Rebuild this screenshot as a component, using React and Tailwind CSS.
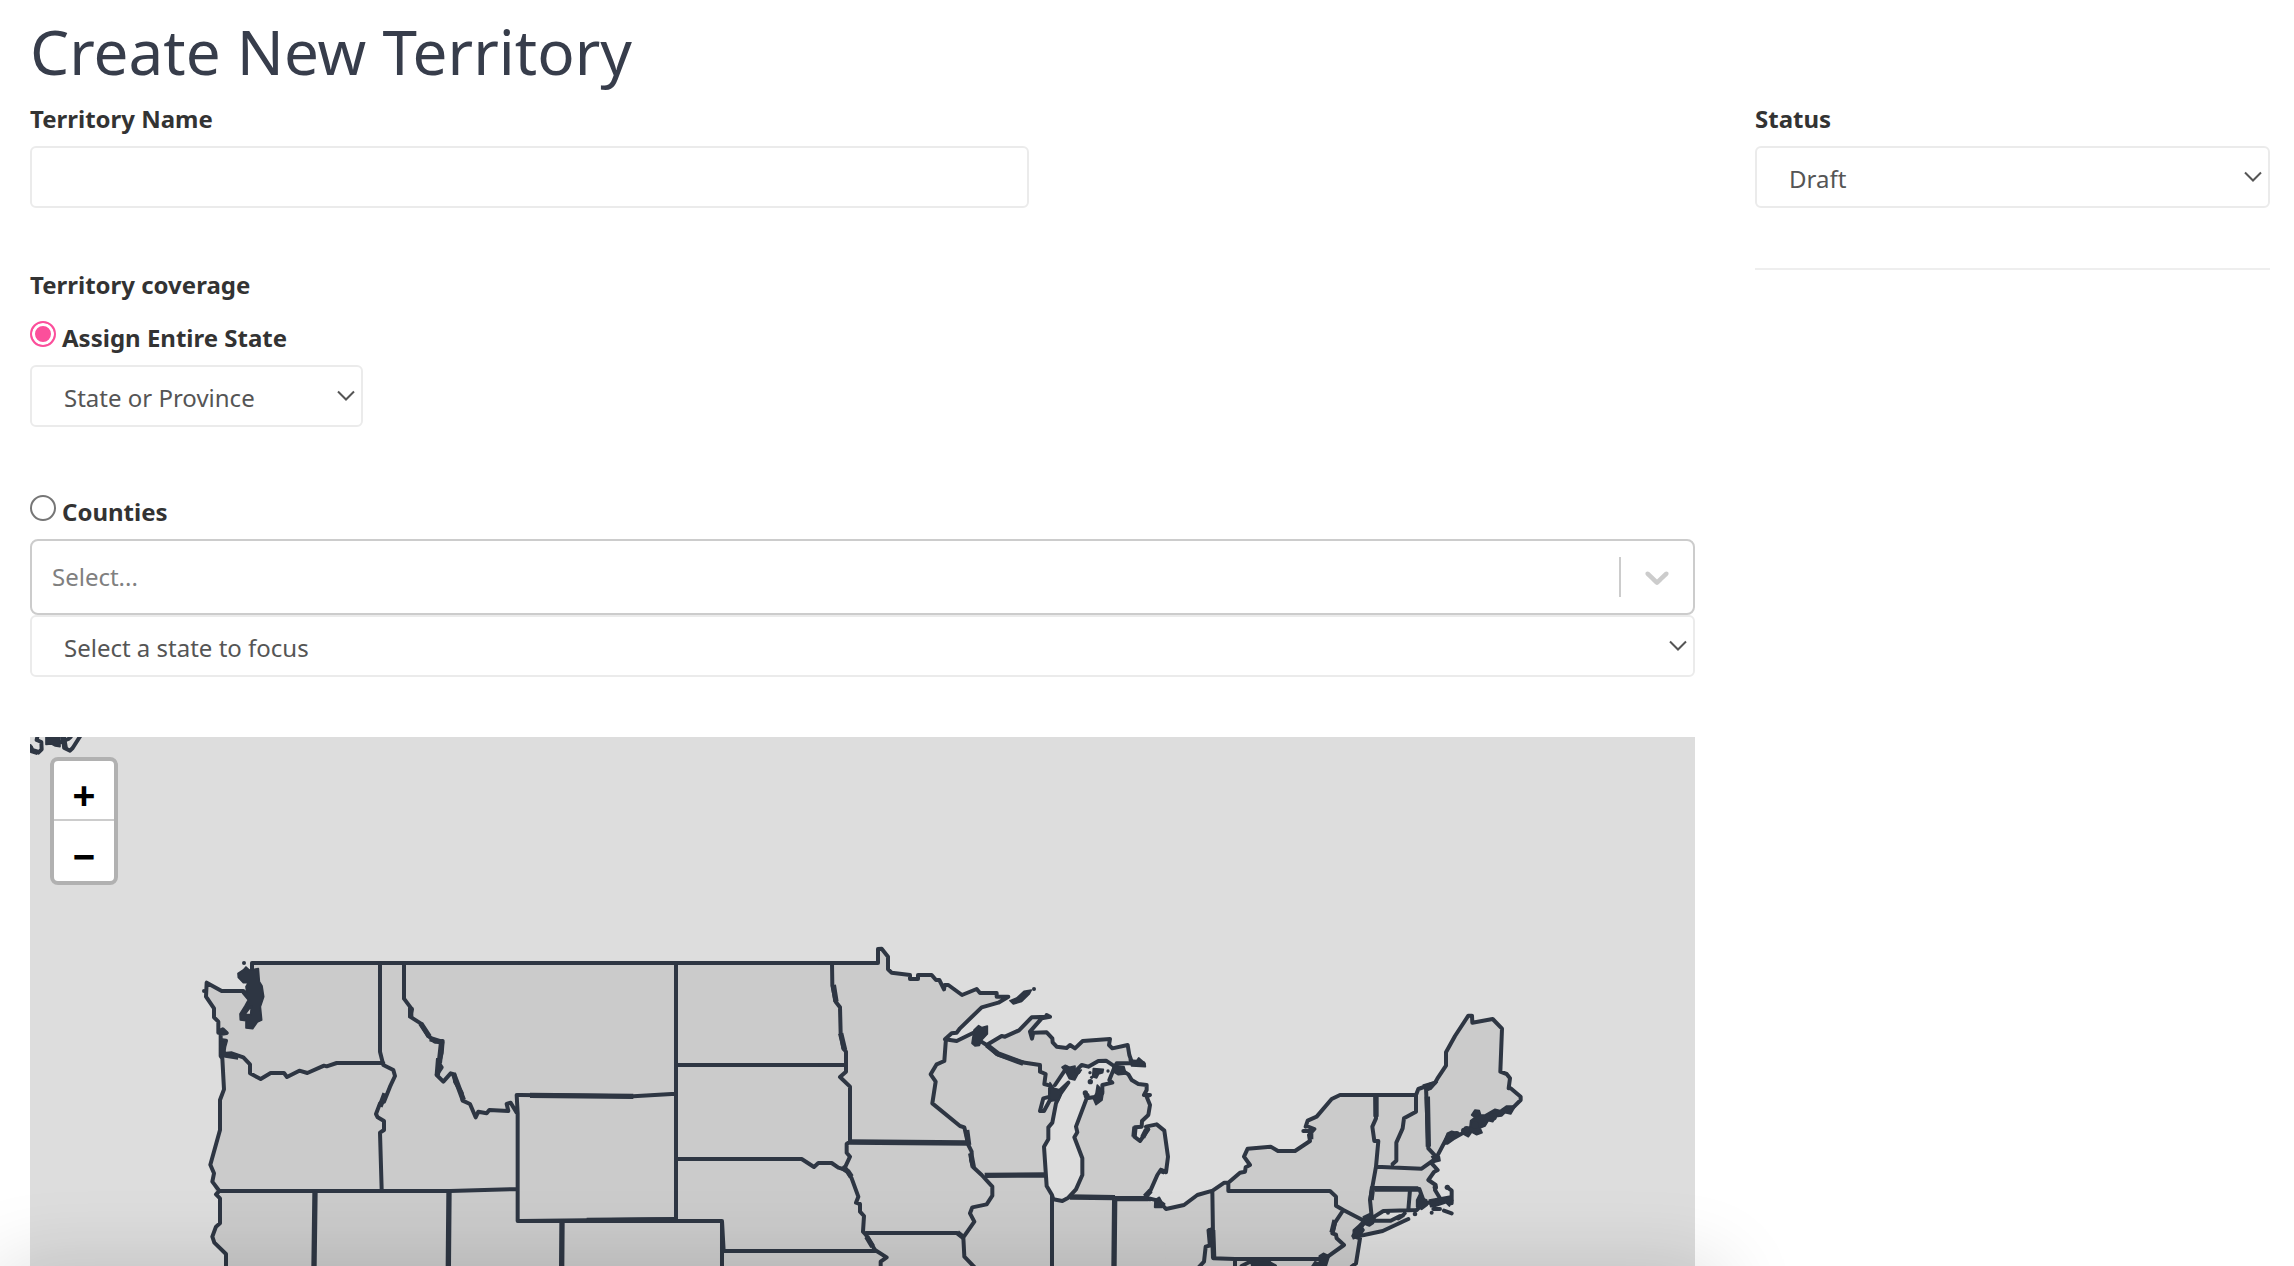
import React, { useState } from "react";

const labelClass = "block text-[24px] leading-[36px] font-bold text-[#333]";
const fieldClass =
  "h-[62px] w-full rounded-md border-2 border-[#ebebeb] bg-white text-[24px] text-[#555] focus:outline-none";

const SelectBox = ({ id, className, label, value, onChange, options }) => (
  <div className={`relative ${className}`}>
    <select
      id={id}
      aria-label={label}
      value={value}
      onChange={onChange}
      className={`${fieldClass} appearance-none pt-[3px] pl-8`}
    >
      {options.map((option) => (
        <option key={option}>{option}</option>
      ))}
    </select>
    <svg
      viewBox="0 0 18 12"
      className="pointer-events-none absolute right-2 top-[25px] h-3 w-[18px]"
      fill="none"
      stroke="#555"
      strokeWidth="2"
    >
      <path d="M1 1.5 9 9.5 17 1.5" />
    </svg>
  </div>
);

const RadioOption = ({ id, value, coverage, setCoverage, children }) => (
  <div className="flex items-start gap-1.5">
    <input
      type="radio"
      id={id}
      name="coverage"
      checked={coverage === value}
      onChange={() => setCoverage(value)}
      className="mt-[3px] h-[26px] w-[26px] shrink-0 appearance-none rounded-full border-2 border-[#767676] bg-white checked:border-[#fb4f9b] checked:bg-[#fb4f9b] checked:shadow-[inset_0_0_0_3px_#fff]"
    />
    <label htmlFor={id} className={`${labelClass} mt-[2px]`}>
      {children}
    </label>
  </div>
);

// Each part of the map has its own grid, three units to a pixel
const mapParts = [
  {
    name: "alaska",
    origin: "translate(0 720)",
    land: "",
    lines:
      "M90 78 95 92 115 98 125 88 124 66 110 60 112 51M188 51 190 66 193 84 210 92 218 84 241 48M183 66 205 57 212 51",
    thick: "M90 80 96 92 113 97M190 51 196 86",
    solid: "M138 50H180V80L166 78 155 72 138 73Z",
  },
  {
    name: "west",
    origin: "translate(180 930)",
    land: "M216 99H1082V1010H138V972L103 938 97 920 108 890 120 880V805L108 793 97 755 102 730 91 704 120 600V510L132 478 127 385 122 330 115 308V275L102 262V235L78 200 80 158 125 183H190L215 195Z",
    lines:
      "M216 130V99H1082M205 198 190 183H125L80 158 78 200 102 235V262L115 275V308L128 298 140 309 122 312V330L138 332 133 350 130 372 155 370 190 382 210 403V430L242 447 272 429H312L321 441 358 422 382 429 432 407 440 409 470 399H610M122 330V378L127 385 132 478 120 510V600L91 704 102 730 97 755 118 783 108 793 120 805V880L108 890 97 920 103 938 138 972V1010M600 99V365L610 405 640 420 645 438 630 470 612 515 600 520 588 552 593 562 612 573V600L600 608 605 778M672 99V206L696 238 690 260 722 280 745 318 765 335 788 333 785 370 777 400 785 412 770 435 790 455 812 430 823 433 825 455 845 488 848 512 870 522 887 562 895 545 920 550 928 540 985 543 980 522 992 518 1010 548M1082 495H1010L1013 550V873H1082M118 783H810L1013 777",
    thick:
      "M405 785 402 1010M807 785 805 1010M127 374 175 381M126 335 128 374M776 385 772 435M692 232V262M722 280 748 320M750 326 788 338M615 490 600 530M785 335 778 400M820 430 850 510",
    solid:
      "M174 130 190 120 198 111 208 120 235 116 238 155 246 168 251 200 241 230 245 270 232 276 218 296 198 294 198 272 181 270 180 252 195 228 205 210 188 190 200 185 198 170 205 158 190 158 175 142ZM214 228 194 254 212 254Z",
    dots: [
      [192, 99, 6],
      [72, 183, 6],
    ],
  },
  {
    name: "plains",
    origin: "translate(520 930)",
    land: "M0 99H902V1010H0Z",
    lines:
      "M0 99H905M468 99V868M468 405H902M468 687H845L882 711 895 699H902M0 873H606L611 963H905M606 873V1010M0 873 468 868M0 495 340 499 468 491",
    thick: "M30 496 340 499M126 879 125 1010M200 871 468 869",
    solid: "",
  },
  {
    name: "lakes",
    origin: "translate(820 930)",
    land: "M0 99H174V57L185 56 204 80V118L215 128 270 135V147H294V135H335L370 165H385L426 195 470 177 480 189H530V200H565L535 218 485 232 410 305 378 328 410 333 465 308 500 345 545 318 597 301 635 262 690 257 665 265 632 305 680 307 697 325 710 350 765 355 788 333 870 327 867 350 923 345 935 395 970 400 890 408 925 433 935 450 980 465 978 495 990 525 985 555 966 573 965 590 945 592 943 620 960 633 990 598 1010 583 1033 602 1044 680 1038 727 1022 720 975 802 1015 818 1038 836V1010H0Z",
    water:
      "M745 458 722 490 708 520 697 578 685 592V628L672 650 680 768 700 808 727 813 745 803 768 778 787 735V685L763 622 772 607 768 590 800 505 848 490V465L877 458 868 450 880 408 858 392 835 393 805 410 785 405 762 425ZM738 412 700 475 715 485 750 448ZM690 500 670 505 660 543 674 543Z",
    lines:
      "M0 99H174V57L185 56 204 80V118L215 128 270 135V147H294V135H335L348 150 358 150 372 178 374 165H385L426 195 470 177 480 189H530V200H565L535 218 485 232 420 295 410 308 395 310 375 328 410 333 465 306M484 335 500 345 545 318 555 320 597 301 635 262 690 260 680 255M690 260 665 265 630 305 636 326 640 308 680 307 697 325 698 337 710 350 740 354 750 345 765 355 788 333 870 327 867 345 877 355 923 345 928 375 935 395 970 400 890 400 885 410 858 392 835 393 805 410 785 405 765 425 740 413 705 465M500 345 530 372 605 397 660 405 660 425 677 432 673 462 690 467V500L670 505 660 543H672L690 510 745 458 722 490 708 520 697 578 685 592V628L672 650 680 768 696 795V1010M696 795 700 808 727 813 745 803 768 778 787 735V685L763 622 772 607 768 590 800 505 830 500 847 490V465L877 458 868 450 885 408 925 433 935 450 955 462 980 465V480L972 495H990L980 500 990 525 985 555 966 573 965 590 945 592 943 620 960 633 985 598 978 590 1010 583 1033 602 1044 680 1038 727 1022 720 1012 735 990 785 975 802 1015 812M36 99 37 165 47 215 60 232 62 310 70 355 78 365V425L60 441 90 470V635L80 642V668L90 680 75 712 95 745 115 800 108 818 120 822V845L132 858 129 905 138 915 165 960 200 982 182 995V1010M0 405H78M378 325 373 393 350 403 332 433 347 455 337 520 420 588 433 592 445 645 455 665 453 690 460 712 485 735 517 770V797L500 823 457 832 450 850 463 875 430 922 433 980 462 1010M138 909H412L430 922M0 963H165M0 699H35L55 713 80 720M980 806 990 808",
    thick: "M88 636 443 639M494 736 678 735M750 801 885 803M885 806H985M884 810 882 1010M40 165 48 215M62 310 74 360M65 712 84 725 94 740M440 600 446 645M500 345 535 372 610 400M452 670 460 712M140 920 158 950M690 510 712 490M975 800 992 782M945 590 942 620M980 598 968 622M1018 720 1034 726M412 908 432 924",
    solid:
      "M456 340 462 300 476 287 486 293 502 288 502 312 485 330 478 346 465 348ZM570 212 590 204 612 184 634 180 628 192 605 214 580 222ZM690 458 702 475 722 480 732 472 715 512 690 512ZM726 412 736 406 748 412 765 408 765 425 784 420 772 435 764 450 748 446 740 430ZM928 390 950 392 956 384 975 400 976 410 935 408ZM880 406 912 410 918 432 895 434 878 424ZM820 416 850 418 848 428 836 432 830 444 818 440ZM820 505 828 490 832 465 850 485 846 510 828 524ZM1005 810 1018 802 1025 815 1034 822 1025 832 1004 832Z",
    dots: [
      [642, 177, 6],
      [810, 428, 5],
      [811, 455, 8],
      [796, 489, 8],
      [864, 423, 5],
      [815, 442, 5],
      [773, 424, 9],
      [800, 497, 9],
    ],
  },
  {
    name: "northeast",
    origin: "translate(1160 1000)",
    land: "M18 627 72 615 112 585 158 572 193 548H205L240 518 270 495 252 470 263 446 332 440 354 453H405L450 423 463 387 437 375 443 362 470 350 515 297 540 285H768L775 267 825 248 858 197V157L885 108 925 47H936L937 68 998 57 1026 86 1021 215 1050 235 1046 265 1082 297 1055 322 990 350 930 385 860 405 828 475 815 490 833 510 805 540 827 555 840 595 790 610 770 630 670 633 620 665 590 710 600 715 588 800H15ZM592 700 640 663 692 662 720 648 745 657 668 693Z",
    lines:
      "M0 607 18 627 72 615 112 585 158 572 193 548H205L240 518 255 515 257 502 270 495 252 470 263 446 332 440 354 453H405L450 423 447 405 463 387 440 378M430 393H455M437 380 443 362 470 350 515 297 540 285H768L775 267 800 258 825 248 832 236 858 197V157L885 108 925 47H936L937 68 998 57 1026 86 1021 215 1040 222 1050 235 1046 265H1052L1082 290V300L1060 322M865 405 828 475 815 490 833 510 822 516 805 540 827 555 825 570 840 595M862 562 875 572V610M205 548V573H510L528 590V617L550 630 525 668 517 700 528 704 530 715 552 735 500 772M550 630 612 662 580 708 600 715 588 790 575 800M157 572 160 775 225 777H480M148 690 155 735 137 740 132 785 118 800M646 285 648 355 637 380 643 423H655L648 500 630 600 635 650M768 285V335L732 355 728 385 709 428V482L698 492M798 262 805 445 828 470M648 500 785 506 828 475M642 563 778 567 790 600M750 570 745 630M620 665 635 655 670 633 770 630 790 610 840 605M582 710 612 705 668 693 745 657M720 648 692 662H640L612 670 585 705M715 655 730 645M820 627H840M852 632 875 640M225 777V800M245 798 270 785 295 798 320 785 345 798",
    thick: "M648 290V350M802 290 805 440M158 690 161 775M645 567H775M525 660 516 698M638 560 633 600M452 400 452 418",
    solid:
      "M1066 318 1052 342 1035 338 1025 348 1008 350 998 365 985 362 975 378 960 384 966 398 950 404 935 396 925 410 910 402 885 416 862 432 850 432 862 400 875 394 900 400 930 380 932 362 945 352 935 345 945 330 958 332 962 345 975 345 1005 328 1020 332 1040 318ZM770 600 780 580 788 595 800 600 802 615 785 628 770 620ZM808 600 840 594 872 588 878 602 868 618 858 608 840 614 822 620 812 620ZM610 650 632 640 645 655 640 670 628 678 612 672ZM790 255 815 248 832 246 812 268 800 272ZM580 690 600 672 612 690 602 706 580 716ZM478 768 490 760 508 768 498 800H455L465 785 478 790ZM275 785 325 780 345 800H275ZM815 470 838 470 840 482 825 486ZM142 690 153 685 158 740 146 735Z",
    dots: [
      [684, 638, 6],
      [765, 642, 7],
      [815, 638, 6],
      [862, 562, 8],
      [734, 640, 6],
      [826, 562, 8],
      [890, 402, 9],
      [912, 392, 9],
      [945, 375, 11],
      [920, 388, 10],
      [1000, 350, 11],
      [950, 340, 10],
    ],
  },
];

const StateMap = () => (
  <svg
    viewBox="30 737 1665 529"
    className="block w-full"
    strokeLinejoin="round"
    strokeLinecap="round"
    role="img"
    aria-label="Map of the states"
  >
    {mapParts.map((part) => (
      <g key={part.name} transform={part.origin}>
        <g transform="scale(0.333333)" fill="none" stroke="#2e3643">
          <path d={part.land} fill="#cbcbcb" stroke="none" />
          {part.water && <path d={part.water} fill="#ddd" stroke="none" />}
          <path d={part.lines} strokeWidth="12" />
          <path d={part.thick} strokeWidth="16" strokeLinecap="butt" />
          <path d={part.solid} fill="#2e3643" strokeWidth="5" />
          {part.dots?.map(([x, y, r]) => (
            <circle key={`${x}-${y}`} cx={x} cy={y} r={r} fill="#2e3643" stroke="none" />
          ))}
        </g>
      </g>
    ))}
  </svg>
);

const App = () => {
  const [name, setName] = useState("");
  const [status, setStatus] = useState("Draft");
  const [coverage, setCoverage] = useState("state");
  const [state, setState] = useState("State or Province");
  const [counties, setCounties] = useState("");
  const [focusState, setFocusState] = useState("Select a state to focus");

  return (
    <div className="flex h-screen flex-col overflow-hidden bg-white pl-[30px] pr-6 font-['Noto_Sans',sans-serif]">
      <h1 className="pt-[5px] pb-1 text-[62px] leading-[92px] text-[#373d4b]">Create New Territory</h1>

      <div className="grid min-h-0 flex-1 grid-cols-[333fr_103fr] gap-[60px]">
        <div className="flex min-h-0 flex-col">
          {/* Name */}
          <label htmlFor="territoryName" className={`${labelClass} mb-[9px]`}>
            Territory Name
          </label>
          <div className="w-3/5">
            <input
              type="text"
              id="territoryName"
              className={`${fieldClass} block px-8`}
              value={name}
              onChange={(e) => setName(e.target.value)}
            />
          </div>

          {/* Coverage */}
          <p className={`${labelClass} mt-[59px] mb-[15px]`}>Territory coverage</p>
          <RadioOption id="entireState" value="state" coverage={coverage} setCoverage={setCoverage}>
            Assign Entire State
          </RadioOption>
          <SelectBox
            label="State or Province"
            className="mt-[9px] w-1/5"
            value={state}
            onChange={(e) => setState(e.target.value)}
            options={["State or Province", "Idaho", "Montana", "Oregon", "Washington"]}
          />

          <div className="mt-[65px]">
            <RadioOption id="counties" value="counties" coverage={coverage} setCoverage={setCoverage}>
              Counties
            </RadioOption>
          </div>
          <div className="mt-[9px] flex h-[76px] shrink-0 items-center rounded-lg border-2 border-[#ccc] bg-white">
            <input
              type="text"
              aria-label="Select counties"
              placeholder="Select..."
              value={counties}
              onChange={(e) => setCounties(e.target.value)}
              className="h-full min-w-0 flex-1 bg-transparent pb-0.5 pl-5 text-[24px] text-[#555] placeholder:text-[#808080] focus:outline-none"
            />
            <span className="h-10 w-0.5 bg-[#ccc]" />
            <button type="button" aria-label="Open counties" className="px-4">
              <svg viewBox="0 0 20 20" className="h-10 w-10" fill="#ccc">
                <path d="M4.516 7.548c0.436-0.446 1.043-0.481 1.576 0l3.908 3.747 3.908-3.747c0.533-0.481 1.141-0.446 1.574 0 0.436 0.445 0.408 1.197 0 1.615-0.406 0.418-4.695 4.502-4.695 4.502-0.217 0.223-0.502 0.335-0.787 0.335s-0.57-0.112-0.789-0.335c0 0-4.287-4.084-4.695-4.502s-0.436-1.17 0-1.615z" />
              </svg>
            </button>
          </div>
          <SelectBox
            label="Select a state to focus"
            className="w-full"
            value={focusState}
            onChange={(e) => setFocusState(e.target.value)}
            options={["Select a state to focus", "Idaho", "Montana", "Oregon", "Washington"]}
          />

          {/* Map */}
          <div className="relative mt-[60px] min-h-0 flex-1 overflow-hidden bg-[#ddd]">
            <StateMap />
            <div className="absolute top-5 left-5 flex flex-col rounded-lg border-4 border-[#b1b1b1] bg-white font-['Inter',sans-serif] text-[40px] leading-[48px] font-semibold text-black">
              <button
                type="button"
                aria-label="Zoom in"
                className="flex h-[60px] w-[60px] items-center justify-center border-b-2 border-[#ccc] pt-2"
              >
                +
              </button>
              <button
                type="button"
                aria-label="Zoom out"
                className="flex h-[60px] w-[60px] items-center justify-center pt-2"
              >
                −
              </button>
            </div>
          </div>
        </div>

        {/* Status */}
        <div>
          <label htmlFor="status" className={`${labelClass} mb-[9px]`}>
            Status
          </label>
          <SelectBox
            id="status"
            className="w-full"
            value={status}
            onChange={(e) => setStatus(e.target.value)}
            options={["Draft", "Published"]}
          />
          <hr className="mt-[60px] border-t-2 border-[#eee]" />
        </div>
      </div>

      {/* Shadow of the bar below the fold */}
      <div className="pointer-events-none fixed -bottom-20 left-0 h-20 w-3/4 shadow-[0_0_80px_rgba(0,0,0,0.15)]" />
    </div>
  );
};

export default App;
